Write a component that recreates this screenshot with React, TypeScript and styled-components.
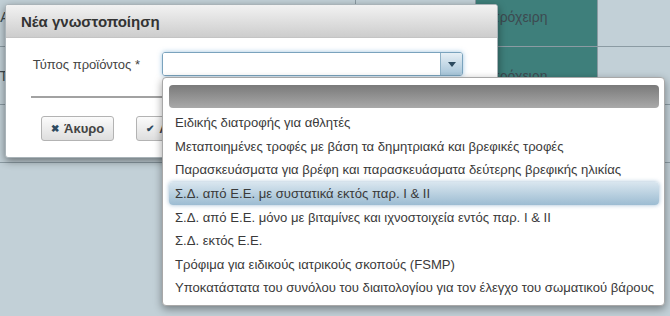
import React from 'react'
import styled, { createGlobalStyle } from 'styled-components'

const options = [
	'Ειδικής διατροφής για αθλητές',
	'Μεταποιημένες τροφές με βάση τα δημητριακά και βρεφικές τροφές',
	'Παρασκευάσματα για βρέφη και παρασκευάσματα δεύτερης βρεφικής ηλικίας',
	'Σ.Δ. από Ε.Ε. με συστατικά εκτός παρ. I & II',
	'Σ.Δ. από Ε.Ε. μόνο με βιταμίνες και ιχνοστοιχεία εντός παρ. I & II',
	'Σ.Δ. εκτός Ε.Ε.',
	'Τρόφιμα για ειδικούς ιατρικούς σκοπούς (FSMP)',
	'Υποκατάστατα του συνόλου του διαιτολογίου για τον έλεγχο του σωματικού βάρους',
]

const ACTIVE = 3

const rows = [
	{ height: 58, cells: ['ΑΑ', 'Ειδικές', 'πρόχειρη', ''] },
	{ height: 57, cells: ['ΤΤ', 'Ειδικές', 'πρόχειρη', ''] },
	{ height: 57, cells: ['', '', '', ''] },
]

const App = () => {
	return (
		<>
			<GlobalStyle />
			<Page>
				<Backdrop>
					{rows.map((row, r) => (
						<Row key={r} $height={row.height}>
							{row.cells.map((text, c) => (
								<Cell key={c} $teal={c === 2} $indent={c === 0}>
									{text}
								</Cell>
							))}
						</Row>
					))}
				</Backdrop>

				<Dialog>
					<DialogHeader>Νέα γνωστοποίηση</DialogHeader>
					<DialogBody>
						<FormRow>
							<Label>Τύπος προϊόντος *</Label>
							<SelectBox>
								<SelectValue />
								<SelectArrow>
									<svg width="8" height="5" viewBox="0 0 8 5">
										<path d="M0 0H8L4 5Z" fill="#2c4a5f" />
									</svg>
								</SelectArrow>
							</SelectBox>
						</FormRow>
						<Rule />
						<Buttons>
							<Button>
								<ButtonIcon>✖</ButtonIcon>Άκυρο
							</Button>
							<Button>
								<ButtonIcon>✔</ButtonIcon>Αποθήκευση
							</Button>
						</Buttons>
					</DialogBody>
				</Dialog>

				<Dropdown>
					<Placeholder />
					{options.map((label, i) => (
						<Option key={label} $active={i === ACTIVE}>
							{label}
						</Option>
					))}
				</Dropdown>
			</Page>
		</>
	)
}

const GlobalStyle = createGlobalStyle`
	html, body {
		margin: 0;
		padding: 0;
		background: #c2d0d7;
	}
	body {
		font-family: 'Liberation Sans', Arial, sans-serif;
		font-size: 13px;
		color: #333;
	}
`

const Page = styled.div`
	position: relative;
	width: 670px;
	height: 316px;
	overflow: hidden;
	background: #c2d0d7;
`

const Backdrop = styled.div`
	display: flex;
	flex-direction: column;
	margin-top: -12px;
`

const Row = styled.div<{ $height: number }>`
	display: grid;
	grid-template-columns: 355px 120px 122px 1fr;
	height: ${({ $height }) => $height}px;
	border-bottom: 1px solid #8b9ba3;
`

const Cell = styled.div<{ $teal: boolean; $indent: boolean }>`
	display: flex;
	align-items: center;
	padding-left: ${({ $indent }) => ($indent ? '0' : '14px')};
	text-indent: ${({ $indent }) => ($indent ? '-9px' : '0')};
	color: #3d4a50;
	font-size: 14px;
	background: ${({ $teal }) => ($teal ? '#3e7f7b' : 'transparent')};
	border-left: ${({ $indent }) => ($indent ? 'none' : '1px solid #8b9ba3')};
	overflow: hidden;
	white-space: nowrap;
`

const Dialog = styled.div`
	position: absolute;
	left: 5px;
	top: 4px;
	width: 491px;
	height: 152px;
	background: #fff;
	border: 1px solid #a9b3b8;
	border-radius: 3px;
	box-shadow: 0 3px 9px rgba(0, 0, 0, 0.45);
	overflow: hidden;
`

const DialogHeader = styled.div`
	display: flex;
	align-items: center;
	height: 32px;
	padding-left: 15px;
	background: linear-gradient(#f2f2f2, #cdcdcd);
	border-bottom: 1px solid #c4c4c4;
	font-size: 15px;
	font-weight: bold;
	color: #333;
`

const DialogBody = styled.div`
	display: flex;
	flex-direction: column;
	padding: 14px 24px 0 24px;
`

const FormRow = styled.div`
	display: grid;
	grid-template-columns: 112px 301px;
	column-gap: 20px;
	align-items: center;
`

const Label = styled.div`
	text-align: right;
	padding-right: 2px;
	color: #444;
`

const SelectBox = styled.div`
	display: flex;
	height: 24px;
	border: 1px solid #7aa3bd;
	border-radius: 3px;
	box-sizing: border-box;
	box-shadow: 0 0 5px rgba(82, 150, 200, 0.55);
	overflow: hidden;
`

const SelectValue = styled.div`
	flex: 1;
	background: #fff;
`

const SelectArrow = styled.div`
	display: flex;
	align-items: center;
	justify-content: center;
	width: 21px;
	border-left: 1px solid #8fb1c6;
	background: linear-gradient(#e6eff5, #a7c5d9);
`

const Rule = styled.div`
	height: 2px;
	margin: 20px 0 18px 1px;
	background: #a2a2a2;
`

const Buttons = styled.div`
	display: flex;
	gap: 22px;
	padding-left: 11px;
`

const Button = styled.div`
	display: flex;
	align-items: center;
	gap: 5px;
	height: 25px;
	padding: 0 9px;
	box-sizing: border-box;
	border: 1px solid #b3b3b3;
	border-radius: 3px;
	background: linear-gradient(#fbfbfb, #dedede);
	font-weight: bold;
	color: #444;
	white-space: nowrap;
`

const ButtonIcon = styled.span`
	font-size: 10px;
	color: #2e4a60;
`

const Dropdown = styled.div`
	position: absolute;
	left: 162px;
	top: 77px;
	width: 503px;
	height: 229px;
	box-sizing: border-box;
	padding: 7px 5px 0 6px;
	background: #fff;
	border: 1px solid #a8a8a8;
	border-radius: 4px;
	box-shadow: 0 3px 8px rgba(0, 0, 0, 0.4);
	display: flex;
	flex-direction: column;
`

const Placeholder = styled.div`
	height: 23px;
	margin-bottom: 3px;
	border-radius: 4px;
	background: linear-gradient(#7a7a7a, #a9a9a9);
`

const Option = styled.div<{ $active: boolean }>`
	display: flex;
	align-items: center;
	height: 23.6px;
	padding-left: 6px;
	border-radius: 4px;
	white-space: nowrap;
	font-size: 13.1px;
	color: #3a3a3a;
	background: ${({ $active }) => ($active ? 'linear-gradient(#d9e6ef, #9cbcd2)' : 'transparent')};
	box-shadow: ${({ $active }) => ($active ? '0 0 4px rgba(90, 140, 180, 0.6)' : 'none')};
`

export default App
